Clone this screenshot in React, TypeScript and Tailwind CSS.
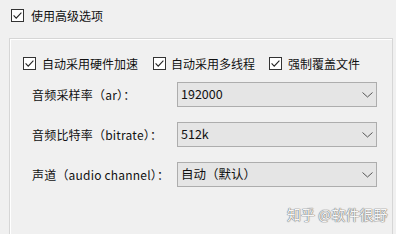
import React from "react";

function Check() {
  return (
    <svg width="13" height="13" viewBox="0 0 13 13" className="shrink-0 block">
      <rect x="0.5" y="0.5" width="12" height="12" fill="#ffffff" stroke="#333333" strokeWidth="1" />
      <path d="M2.6 6.4 L5.2 9.1 L10.4 3.6" fill="none" stroke="#222222" strokeWidth="1.1" />
    </svg>
  );
}

function Chevron() {
  return (
    <svg width="11" height="6" viewBox="0 0 11 6" className="block">
      <path d="M0.5 0.5 L5.5 5 L10.5 0.5" fill="none" stroke="#555555" strokeWidth="1" />
    </svg>
  );
}

function Select({ value }: { value: string }) {
  return (
    <div className="w-[200px] h-[25px] shrink-0 border border-[#adadad] bg-[#e5e5e5] flex items-center justify-between pl-[3px] pr-[3px]">
      <span className="text-[12.5px] text-[#111] leading-none">{value}</span>
      <Chevron />
    </div>
  );
}

function Row({ label, value }: { label: string; value: string }) {
  return (
    <div className="flex items-center">
      <div className="w-[167px] shrink-0 pl-[22px] text-[12px] text-[#111] whitespace-nowrap leading-none tracking-[0.2px]">{label}</div>
      <Select value={value} />
    </div>
  );
}

export default function App() {
  return (
    <div
      className="w-[396px] h-[234px] bg-[#f0f0f0] relative overflow-hidden"
      style={{ fontFamily: '"Noto Sans CJK SC", "Noto Sans", sans-serif' }}
    >
      <div className="flex items-center pt-[9px] pl-[11px] gap-[7px]">
        <Check />
        <span className="text-[12px] text-[#111] leading-[13px]">使用高级选项</span>
      </div>
      <div className="ml-[9px] mt-[16px] w-[384px] h-[220px] border border-[#d6d6d6] shadow-[inset_1px_1px_0_#ffffff] pt-[18px]">
        <div className="flex items-center pl-[13px] text-[12px] text-[#111] leading-[13px] whitespace-nowrap">
          <Check />
          <span className="ml-[6px]">自动采用硬件加速</span>
          <span className="ml-[15px]"><Check /></span>
          <span className="ml-[5px]">自动采用多线程</span>
          <span className="ml-[14px]"><Check /></span>
          <span className="ml-[6px]">强制覆盖文件</span>
        </div>
        <div className="flex flex-col gap-[15px] mt-[12px]">
          <Row label="音频采样率（ar）：" value="192000" />
          <Row label="音频比特率（bitrate）：" value="512k" />
          <Row label="声道（audio channel）：" value="自动（默认）" />
        </div>
      </div>
      <div className="absolute left-[287px] top-[204px] text-[14px] text-[#f6f6f6] whitespace-nowrap [text-shadow:0_0_1px_#7a7a7a,0_0_1px_#7a7a7a,0_0_1px_#7a7a7a]">
        知乎 @软件很野
      </div>
    </div>
  );
}
